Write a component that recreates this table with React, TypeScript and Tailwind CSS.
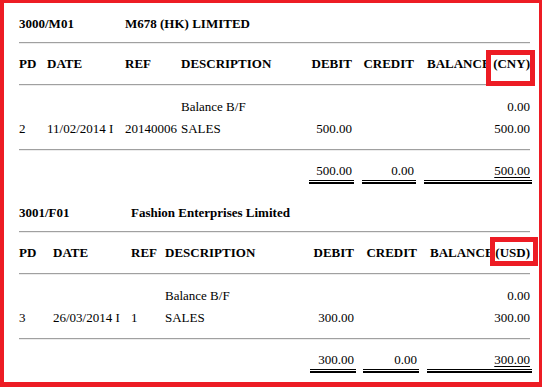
import React from "react";

type Cols = {
  pd: string;
  date: string;
  ref: string;
  desc: string;
  debit: string;
  credit: string;
  bal: string;
  title: string;
  debitBox: string;
  creditBox: string;
  balBox: string;
  box: string;
};

const cols1: Cols = {
  pd: "w-[28px] shrink-0",
  date: "w-[78px] shrink-0",
  ref: "w-[56px] shrink-0",
  desc: "w-[128px] shrink-0",
  debit: "w-[45px] shrink-0 text-right pr-[2px]",
  credit: "w-[54px] ml-[8px] shrink-0 text-right pr-[2px]",
  bal: "w-[108px] ml-[8px] shrink-0 text-right pr-[2px]",
  title: "w-[106px] shrink-0",
  debitBox: "w-[45px] shrink-0 flex flex-col",
  creditBox: "w-[54px] ml-[8px] shrink-0 flex flex-col",
  balBox: "w-[108px] ml-[8px] shrink-0 flex flex-col",
  box: "left-[467px] top-[-3px] w-[49px] h-[36px]",
};

const cols2: Cols = {
  pd: "w-[34px] shrink-0",
  date: "w-[78px] shrink-0",
  ref: "w-[34px] shrink-0",
  desc: "w-[145px] shrink-0",
  debit: "w-[46px] shrink-0 text-right pr-[2px]",
  credit: "w-[56px] ml-[7px] shrink-0 text-right pr-[2px]",
  bal: "w-[105px] ml-[8px] shrink-0 text-right pr-[2px]",
  title: "w-[112px] shrink-0",
  debitBox: "w-[46px] shrink-0 flex flex-col",
  creditBox: "w-[56px] ml-[7px] shrink-0 flex flex-col",
  balBox: "w-[105px] ml-[8px] shrink-0 flex flex-col",
  box: "left-[471px] top-[-5px] w-[48px] h-[29px]",
};

function Hr({ className }: { className: string }) {
  return (
    <div
      className={
        "w-[511px] h-[2px] border-t border-t-[#a0a0a0] border-b border-b-[#ececec] " +
        className
      }
    />
  );
}

type SectionProps = {
  code: string;
  name: string;
  cur: string;
  pd: string;
  date: string;
  refNo: string;
  amount: string;
  cols: Cols;
  className: string;
};

function Section({ code, name, cur, pd, date, refNo, amount, cols, className }: SectionProps) {
  return (
    <div className={"flex flex-col " + className}>
      <div className="flex h-[20px] items-center font-bold whitespace-nowrap">
        <div className={cols.title}>{code}</div>
        <div>{name}</div>
      </div>
      <Hr className="mt-[9px]" />
      <div className="relative flex h-[20px] items-center font-bold whitespace-nowrap mt-[9px]">
        <div className={cols.pd}>PD</div>
        <div className={cols.date}>DATE</div>
        <div className={cols.ref}>REF</div>
        <div className={cols.desc}>DESCRIPTION</div>
        <div className={cols.debit}>DEBIT</div>
        <div className={cols.credit}>CREDIT</div>
        <div className={cols.bal + " flex justify-between pl-[3px]"}>
          <span>BALANCE</span>
          <span>({cur})</span>
        </div>
        <div className={"absolute border-[5px] border-[#ed1c24] " + cols.box} />
      </div>
      <Hr className="mt-[11px]" />
      <div className="flex h-[22px] items-center mt-[9px] whitespace-nowrap">
        <div className={cols.pd}></div>
        <div className={cols.date}></div>
        <div className={cols.ref}></div>
        <div className={cols.desc}>Balance B/F</div>
        <div className={cols.debit}></div>
        <div className={cols.credit}></div>
        <div className={cols.bal}>0.00</div>
      </div>
      <div className="flex h-[22px] items-center whitespace-nowrap">
        <div className={cols.pd}>{pd}</div>
        <div className={cols.date}>{date}</div>
        <div className={cols.ref}>{refNo}</div>
        <div className={cols.desc}>SALES</div>
        <div className={cols.debit}>{amount}</div>
        <div className={cols.credit}></div>
        <div className={cols.bal}>{amount}</div>
      </div>
      <Hr className="mt-[10px]" />
      <div className="flex mt-[9px] whitespace-nowrap">
        <div className={cols.pd}></div>
        <div className={cols.date}></div>
        <div className={cols.ref}></div>
        <div className={cols.desc}></div>
        <div className={cols.debitBox}>
          <div className="h-[20px] flex items-center justify-end pr-[2px]">{amount}</div>
          <div className="h-[4px] border-t border-b-2 border-black" />
        </div>
        <div className={cols.creditBox}>
          <div className="h-[20px] flex items-center justify-end pr-[2px]">0.00</div>
          <div className="h-[4px] border-t border-b-2 border-black" />
        </div>
        <div className={cols.balBox}>
          <div className="h-[20px] flex items-center justify-end pr-[2px]">
            <span className="underline underline-offset-[2px]">{amount}</span>
          </div>
          <div className="h-[4px] border-t border-b-2 border-black" />
        </div>
      </div>
    </div>
  );
}

export default function App() {
  return (
    <div className="w-[542px] h-[387px] bg-white border-t-[3px] border-l-[4px] border-r-[3px] border-b-[5px] border-[#ed1c24] pl-[15px] font-['Liberation_Serif','Times_New_Roman',serif] text-[13px] leading-[15px] text-black overflow-hidden">
      <Section
        code="3000/M01"
        name="M678 (HK) LIMITED"
        cur="CNY"
        pd="2"
        date="11/02/2014 I"
        refNo="20140006"
        amount="500.00"
        cols={cols1}
        className="pt-[10px]"
      />
      <Section
        code="3001/F01"
        name="Fashion Enterprises Limited"
        cur="USD"
        pd="3"
        date="26/03/2014 I"
        refNo="1"
        amount="300.00"
        cols={cols2}
        className="pt-[18px]"
      />
    </div>
  );
}
